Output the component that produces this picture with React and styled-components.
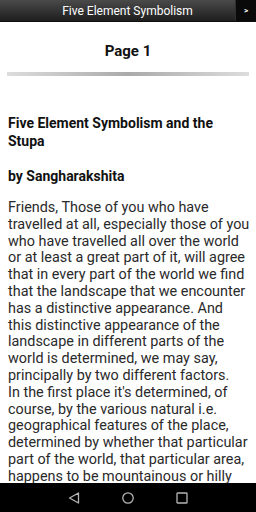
import React from "react";
import styled, { createGlobalStyle } from "styled-components";

const GlobalStyle = createGlobalStyle`
  html, body {
    margin: 0;
    padding: 0;
    background: #ffffff;
  }
  body {
    font-family: Roboto, "Liberation Sans", sans-serif;
  }
`;

const Screen = styled.div`
  width: 256px;
  height: 512px;
  display: flex;
  flex-direction: column;
  overflow: hidden;
  background: #ffffff;
`;

const TitleBar = styled.div`
  height: 21px;
  flex: none;
  display: flex;
  align-items: stretch;
  background: linear-gradient(#4a4a4a, #1e1e1e);
  border-bottom: 1px solid #0e0e0e;
`;

const Title = styled.div`
  flex: 1;
  display: flex;
  align-items: center;
  justify-content: center;
  padding-left: 20px;
  color: #ffffff;
  font-size: 12px;
`;

const NextButton = styled.div`
  width: 20px;
  display: flex;
  align-items: center;
  justify-content: center;
  background: #0a0a0a;
  border-left: 1px solid #2e2e2e;
  color: #ffffff;
  font-size: 8px;
  font-weight: bold;
`;

const Content = styled.div`
  flex: 1;
  overflow: hidden;
  padding: 0 8px;
  color: #111111;
`;

const PageTitle = styled.h2`
  margin: 19px 0 0;
  text-align: center;
  font-size: 15px;
  font-weight: bold;
  line-height: 20px;
`;

const Divider = styled.div`
  height: 4px;
  margin: 11px -1px 0;
  background: linear-gradient(90deg, #dddddd, #aaaaaa 50%, #dddddd);
`;

const Heading = styled.h3`
  margin: ${(p) => p.top}px 0 0;
  font-size: 14px;
  font-weight: bold;
  line-height: 18px;
`;

const Body = styled.div`
  margin: 15px 0 0;
  font-size: 14.4px;
  line-height: 16.8px;
  color: #2a2a2a;
`;

const Line = styled.div`
  white-space: nowrap;
`;

const NavBar = styled.div`
  height: 29px;
  flex: none;
  background: #000000;
  display: flex;
  align-items: center;
  justify-content: center;
  gap: 42px;
`;

const NavIcon = styled.svg`
  width: 12px;
  height: 12px;
  stroke: #b4b4b4;
  stroke-width: 1.3;
  fill: none;
`;

const lines = [
  "Friends, Those of you who have",
  "travelled at all, especially those of you",
  "who have travelled all over the world",
  "or at least a great part of it, will agree",
  "that in every part of the world we find",
  "that the landscape that we encounter",
  "has a distinctive appearance. And",
  "this distinctive appearance of the",
  "landscape in different parts of the",
  "world is determined, we may say,",
  "principally by two different factors.",
  "In the first place it's determined, of",
  "course, by the various natural i.e.",
  "geographical features of the place,",
  "determined by whether that particular",
  "part of the world, that particular area,",
  "happens to be mountainous or hilly",
];

export default function App() {
  return (
    <Screen>
      <GlobalStyle />
      <TitleBar>
        <Title>Five Element Symbolism</Title>
        <NextButton>&gt;</NextButton>
      </TitleBar>
      <Content>
        <PageTitle>Page 1</PageTitle>
        <Divider />
        <Heading top={38}>Five Element Symbolism and the Stupa</Heading>
        <Heading top={17}>by Sangharakshita</Heading>
        <Body>
          {lines.map((l, i) => (
            <Line key={i}>{l}</Line>
          ))}
        </Body>
      </Content>
      <NavBar>
        <NavIcon viewBox="0 0 12 12">
          <path d="M10.5 1 L1.5 6 L10.5 11 Z" strokeLinejoin="round" />
        </NavIcon>
        <NavIcon viewBox="0 0 12 12">
          <circle cx="6" cy="6" r="5.2" />
        </NavIcon>
        <NavIcon viewBox="0 0 12 12">
          <rect x="1" y="1" width="10" height="10" rx="0.6" />
        </NavIcon>
      </NavBar>
    </Screen>
  );
}
